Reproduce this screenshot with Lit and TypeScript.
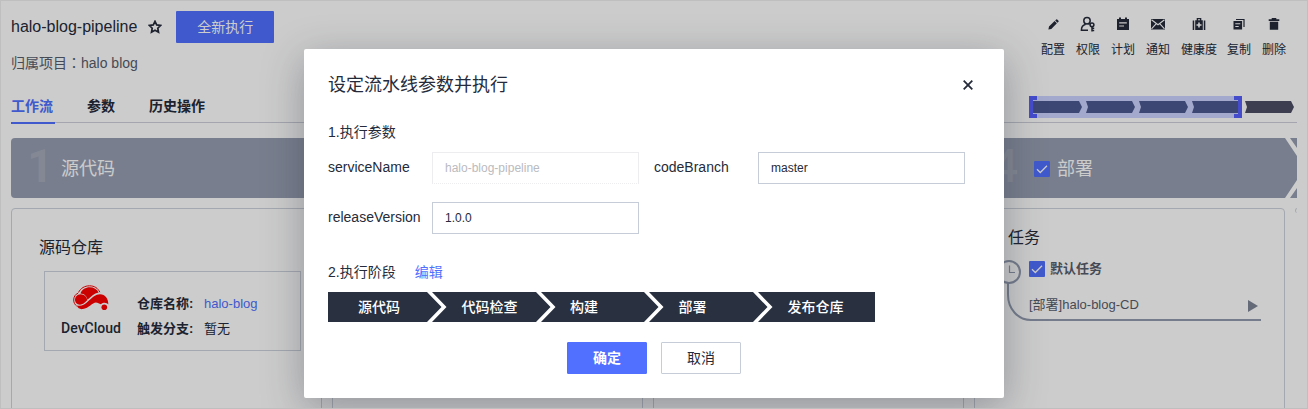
import { LitElement, html, css, svg, nothing } from "lit";
import { customElement } from "lit/decorators.js";

const ICONS: Record<string, unknown> = {
  edit: svg`<path d="M4 10.6 9.6 5l2.3 2.3-5.6 5.6L3.4 13.4ZM10.2 4.4l1-1q.5-.4 1 0l1.3 1.3q.4.5 0 1l-1 1Z" fill="currentColor"/>`,
  user: svg`<g fill="none" stroke="currentColor" stroke-width="1.5"><circle cx="7" cy="4.7" r="3.2"/><path d="M8 14.2H1.4c0-3.3 1.7-5.3 4.3-6M8.7 8.2l.8.4"/><circle cx="12" cy="8.8" r="1.9"/><path d="M12 10.5v5M12 12.2h2.2M12 14.6h2.2"/></g>`,
  plan: svg`<path fill="currentColor" fill-rule="evenodd" d="M2 3h2V1.6h2V3h4V1.6h2V3h2v11H2ZM4.2 6.3v1.2h7.6V6.3ZM4.2 9.4v1.2h4.8V9.4Z"/>`,
  mail: svg`<path d="M1 3h14v10.5H1Z" fill="currentColor"/><path d="m1.5 3.8 6.5 5 6.5-5M1.5 12.8l4.6-5M14.5 12.8 9.900 7.800" fill="none" stroke="#fff" stroke-width="1.1"/>`,
  health: svg`<path fill="currentColor" fill-rule="evenodd" d="M1.700 4.500h1.500v9.500H1.700ZM12.800 4.500h1.500v9.500h-1.500ZM4.200 4.200h1.500V2h4.600v2.200h1.500V14H4.200ZM7 3.200v1h2v-1ZM7.200 6.500v1.700H5.500v1.600h1.700v1.700h1.600V9.800h1.700V8.200H8.800V6.500Z"/>`,
  copy: svg`<path fill="currentColor" fill-rule="evenodd" d="M2.500 5h8.600v8.500H2.500ZM4.300 7.200v1.100h5V7.200ZM4.300 10v1.100h3.400V10Z"/><path fill="none" stroke="currentColor" stroke-width="1.200" d="M5 3.500h8V11"/>`,
  trash: svg`<path fill="currentColor" d="M2.700 3.300h3V2h4.600v1.300h3v1.600H2.700ZM3.800 5.800h8.400v8H3.800Z"/>`,
};

const ACTIONS = [
  { icon: "edit", label: "配置" },
  { icon: "user", label: "权限" },
  { icon: "plan", label: "计划" },
  { icon: "mail", label: "通知" },
  { icon: "health", label: "健康度" },
  { icon: "copy", label: "复制" },
  { icon: "trash", label: "删除" },
];

const STEPS = ["源代码", "代码检查", "构建", "部署", "发布仓库"];

const base = css`
  * { box-sizing: border-box; }
  svg { display: block; flex: none; }
`;

@customElement("check-box")
class CheckBox extends LitElement {
  static styles = [base, css`
    :host { display: block; width: 16px; height: 16px; flex: none; background: #5170ff; border-radius: 1px; }
  `];
  render() {
    return html`<svg width="16" height="16" viewBox="0 0 16 16"><path d="m3 8.300 3.300 3.200L13 4.800" fill="none" stroke="#fff" stroke-width="1.300"/></svg>`;
  }
}

@customElement("pipeline-page")
class PipelinePage extends LitElement {
  static styles = [base, css`
    :host { display: block; height: 409px; padding: 11px 11px 0; overflow: hidden; background: #fff; color: #252b3a; }
    .top { display: flex; justify-content: space-between; height: 111px; }
    .left { display: flex; flex-direction: column; }
    .name-row { display: flex; align-items: center; height: 32px; font-size: 16px; }
    .star { margin: 0 14px 0 11px; }
    .run { width: 98px; height: 32px; line-height: 32px; text-align: center; background: #5170ff; color: #fff; font-size: 14px; border-radius: 1px; }
    .project { margin-top: 9px; line-height: 20px; font-size: 14px; color: #575d6c; }
    .colon { font-family: "Noto Sans CJK TC", sans-serif; }
    .tabs { display: flex; gap: 34px; margin-top: 21px; font-size: 14px; font-weight: 700; line-height: 24px; }
    .tab { height: 30px; }
    .active { color: #5170ff; border-bottom: 2px solid #5170ff; width: 44px; margin-right: -2px; }
    .right { display: flex; flex-direction: column; align-items: flex-end; }
    .actions { display: flex; gap: 11px; margin: 5px 11px 0 0; font-size: 12px; }
    .action { display: flex; flex-direction: column; align-items: center; line-height: 18px; gap: 9px; }
    .action:nth-child(5) { margin-right: -1px; }
    .mini { margin: 37px 3px 0 0; }
    .scroll { border-top: 1px solid #cdcfda; padding-top: 15px; overflow: hidden; height: 300px; }
    .banner { display: grid; grid-template-columns: 963px 1fr; height: 60px; background: #979eb1; border-radius: 4px 0 0 4px; }
    .stage { display: flex; align-items: center; height: 60px; padding-bottom: 3px; font-size: 18px; color: #fff; }
    .num { width: 34px; margin-left: 16px; font-family: Roboto, sans-serif; font-weight: 700; font-size: 46px; line-height: 57px; color: rgba(255,255,255,.13); }
    .deploy .num { margin-left: 18px; width: 42px; font-weight: 500; }
    .stage check-box { margin-right: 7px; margin-top: 5px; }
    .edge { margin: 0 0 -3px auto; }
    .cards { display: grid; grid-template-columns: repeat(5, 311px); gap: 10px; margin-top: 10px; height: 230px; }
    .card { border: 1px solid #cdd2dc; border-radius: 4px; }
    .next { height: 5px; border-bottom: 0; }
    .first { padding: 27px 20px 0 27px; }
    .h { font-size: 16px; line-height: 24px; }
    .repo { display: flex; align-items: flex-start; width: 257px; height: 80px; margin: 11px 0 0 5px; border: 1px solid #cdd2dc; font-size: 13px; }
    .brand { width: 60px; margin-left: 16px; padding-top: 13px; display: flex; flex-direction: column; align-items: center; gap: 8px; font-family: Roboto, sans-serif; font-weight: 500; font-size: 14px; line-height: 18px; white-space: nowrap; }
    .facts { display: grid; grid-template-columns: 67px auto; margin: 19px 0 0 16px; line-height: 25px; }
    .facts b { font-weight: 700; }
    .link { color: #5170ff; }
    .last { display: flex; flex-direction: column; padding-top: 17px; }
    .last .h { margin-left: 33px; }
    .job { display: grid; grid-template-columns: 54px 1fr; margin-top: 8px; height: 64px; }
    .job-body { font-size: 13px; color: #575d6c; }
    .default { display: flex; align-items: center; gap: 5px; height: 20px; font-weight: 700; }
    .default span { padding-bottom: 2px; }
    .default check-box { margin-top: 2px; }
    .task { display: flex; align-items: center; justify-content: space-between; height: 20px; margin-top: 16px; width: 229px; }
    .task span { padding-bottom: 2px; }
    .task svg { margin-top: 4px; }
    .rail { overflow: visible; }
  `];

  render() {
    return html`
      <div class="top">
        <div class="left">
          <div class="name-row">
            <span>halo-blog-pipeline</span>
            <svg class="star" width="14" height="14" viewBox="0 0 14 14"><path d="m7 1.300 1.700 3.600 4 .5-2.900 2.800.7 4L7 10.300l-3.500 1.900.7-4L1.300 5.400l4-.5Z" fill="none" stroke="currentColor" stroke-width="1.700"/></svg>
            <div class="run">全新执行</div>
          </div>
          <div class="project">归属项目<span class="colon">：</span>halo blog</div>
          <div class="tabs">
            <div class="tab active">工作流</div><div class="tab">参数</div><div class="tab">历史操作</div>
          </div>
        </div>
        <div class="right">
          <div class="actions">
            ${ACTIONS.map(a => html`<div class="action">
              <svg width="16" height="16" viewBox="0 0 16 16">${ICONS[a.icon]}</svg><span>${a.label}</span></div>`)}
          </div>
          <svg class="mini" width="265" height="22" viewBox="0 0 265 22">
            <rect width="213" height="22" fill="#cbd4ff"/>
            <path d="M0 0h8v4H4v14h4v4H0ZM213 0h-8v4h4v14h-4v4h8Z" fill="#5760ff"/>
            ${[4, 57, 110, 163].map((x, i) => svg`<path d="M${x} 5h46${i === 3 ? "v12" : "l3 6-3 6"}H${x}${i ? "l2-6Z" : "Z"}" fill="#4d5991"/>`)}
            <path d="M216 5h46l3 6-3 6h-46l2-6Z" fill="#4d4f64"/>
          </svg>
        </div>
      </div>
      <div class="scroll">
        <div class="banner">
          <div class="stage"><span class="num">1</span>源代码</div>
          <div class="stage deploy"><span class="num">4</span><check-box></check-box>部署
            <svg class="edge" width="13" height="60" viewBox="0 0 13 60"><path d="M1 0h5l7 10v8ZM1 60h5l7-10v-8Z" fill="#fff"/></svg>
          </div>
        </div>
        <div class="cards">
          <div class="card first">
            <div class="h">源码仓库</div>
            <div class="repo">
              <div class="brand">
                <svg width="36" height="26" viewBox="0 0 36 26">
                  <path d="M5.500 7.500C7.500 3.200 11.800.8 16.500.8c4.800 0 8.500 2.300 10.300 6.400" fill="none" stroke="#fe0000" stroke-width="1"/>
                  <path d="M7.400 8.400C9 4.500 12.600 2.300 16.700 2.300c4.200 0 7.300 2 8.900 5.200-4.700.9-7.500 4-11.200 7.300C14 11.200 11.300 8.500 7.400 8.400Z" fill="#fe0000"/>
                  <path d="M14.200 15.200c-2.600 2.600-4.700 4.300-7.200 4.500C3.900 19.600 2 17.300 2 14.700c0-3 2.300-5.400 5.600-5.500 3.700.1 6.200 2.500 6.600 6Z" fill="#fe0000"/>
                  <path d="M5 8.200C2.300 9.200.7 11.800.7 15c0 2.700 1.200 4.800 3 6" fill="none" stroke="#fe0000" stroke-width="1"/>
                  <path d="M3.800 20.600c4.800 1 8.200-1.200 11.600-4.500C19.500 12.200 22.500 9.200 27 9.200c5.200 0 8.500 4.700 8.300 10.400-1.500-2-4.600-2.700-7.400-.3-1.700-.7-3-1.900-5-1.900-3.500 0-6.800 5.600-13.200 6.700-2.500.5-5-.8-5.900-3.500Z" fill="#fe0000"/>
                  <circle cx="31.300" cy="22.200" r="2.800" fill="#fe0000"/>
                </svg>
                <span>DevCloud</span>
              </div>
              <div class="facts">
                <b>仓库名称:</b><span class="link">halo-blog</span>
                <b>触发分支:</b><span>暂无</span>
              </div>
            </div>
          </div>
          <div class="card"></div>
          <div class="card"></div>
          <div class="card last">
            <div class="h">任务</div>
            <div class="job">
              <svg class="rail" width="54" height="64" viewBox="0 0 54 64" fill="none" stroke="#939cb0" stroke-width="2">
                <circle cx="34" cy="14" r="11"/><path d="M34.500 7.500V14.500H40" stroke-width="1.200"/>
                <path d="M33 25v12c0 14 10 25 23 25h230"/>
              </svg>
              <div class="job-body">
                <div class="default"><check-box></check-box><span>默认任务</span></div>
                <div class="task"><span>[部署]halo-blog-CD</span>
                  <svg width="10" height="12" viewBox="0 0 10 12"><path d="M0 0 10 6 0 12Z" fill="#7e8595"/></svg></div>
              </div>
            </div>
          </div>
          <div class="card next"></div>
        </div>
      </div>`;
  }
}

@customElement("run-dialog")
class RunDialog extends LitElement {
  static styles = [base, css`
    :host { display: block; width: 700px; height: 349px; padding: 24px; background: #fff; border-radius: 2px; box-shadow: 0 10px 40px rgba(37,43,58,.35); color: #252b3a; font-size: 14px; line-height: 20px; }
    .head { display: flex; justify-content: space-between; align-items: center; height: 24px; font-size: 18px; padding-right: 7px; }
    .title { margin-top: 25px; height: 20px; }
    .title.stages { margin-top: 28px; }
    .form { display: grid; grid-template-columns: 104px 207px 104px 207px; row-gap: 18px; margin-top: 10px; }
    .form > * { height: 32px; }
    .label { line-height: 30px; }
    .label.right { padding-left: 15px; width: 119px; }
    .field { border: 1px solid #c7ccd9; padding-left: 12px; line-height: 31px; font-size: 12px; }
    .field.branch { margin-left: 15px; width: 207px; }
    .disabled { border-color: #ededf0; border-bottom-style: dotted; color: #babbc0; }
    .edit { color: #5170ff; margin-left: 19px; }
    .steps { display: grid; grid-template-columns: 99px 108.500px 108.500px 109px 122px; width: 547px; height: 30px; margin-top: 10px; background: #293040; color: #fff; line-height: 30px; font-weight: 500; }
    .step { display: flex; }
    .step:first-child { padding-left: 30px; }
    .step span { margin-left: 14.500px; }
    .step:first-child span { margin: 0; }
    .buttons { display: flex; justify-content: center; gap: 14px; margin-top: 20px; }
    .btn { width: 80px; height: 32px; line-height: 30px; text-align: center; border: 1px solid #c7ccd9; border-radius: 1px; }
    .ok { background: #5170ff; border-color: #5170ff; color: #fff; font-weight: 700; }
  `];
  render() {
    return html`
      <div class="head"><span>设定流水线参数并执行</span>
        <svg width="10" height="10" viewBox="0 0 10 10"><path d="m.7.7 8.600 8.600M9.300.7.7 9.300" stroke="currentColor" stroke-width="1.800"/></svg></div>
      <div class="title">1.执行参数</div>
      <div class="form">
        <div class="label">serviceName</div><div class="field disabled">halo-blog-pipeline</div>
        <div class="label right">codeBranch</div><div class="field branch">master</div>
        <div class="label">releaseVersion</div><div class="field">1.0.0</div>
      </div>
      <div class="title stages">2.执行阶段<span class="edit">编辑</span></div>
      <div class="steps">
        ${STEPS.map((s, i) => html`<div class="step">
          ${i ? html`<svg width="20" height="30" viewBox="0 0 20 30"><path d="M0 0h5l14.500 15L5 30H0l14.500-15Z" fill="#fff"/></svg>` : nothing}
          <span>${s}</span></div>`)}
      </div>
      <div class="buttons"><div class="btn ok">确定</div><div class="btn">取消</div></div>`;
  }
}

@customElement("app-root")
class AppRoot extends LitElement {
  static styles = [base, css`
    :host { display: block; position: relative; width: 1308px; height: 409px; overflow: hidden; font-family: "Liberation Sans", "Noto Sans CJK SC", sans-serif; }
    .mask { position: absolute; inset: 0; background: rgba(0,0,0,.2); }
    .dialog { position: absolute; left: 304px; top: 49px; }
    .frame { position: absolute; inset: 0; border: 1px solid #bfbfbf; }
  `];
  render() {
    return html`<pipeline-page></pipeline-page><div class="mask"></div>
      <run-dialog class="dialog"></run-dialog><div class="frame"></div>`;
  }
}
